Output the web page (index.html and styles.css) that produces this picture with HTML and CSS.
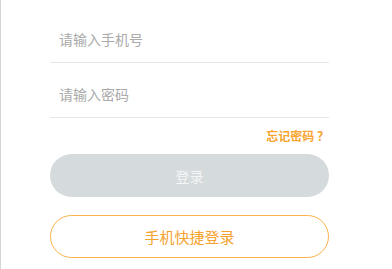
FILE: index.html
```html
<!DOCTYPE html>
<html>
<head>
<meta charset="utf-8">
<link rel="stylesheet" href="styles.css">
</head>
<body>
<div class="page">
  <form class="form">
    <div class="field"><span class="placeholder">请输入手机号</span></div>
    <div class="field"><span class="placeholder">请输入密码</span></div>
    <div class="forgot"><a class="forgot-link">忘记密码 ？</a></div>
    <button type="button" class="btn btn-login">登录</button>
    <button type="button" class="btn btn-quick">手机快捷登录</button>
  </form>
</div>
</body>
</html>
```
FILE: styles.css
```css
html, body {
  margin: 0;
  padding: 0;
  background: #ffffff;
}
.page {
  width: 392px;
  height: 269px;
  box-sizing: border-box;
  border-left: 1px solid #d4d4d4;
  overflow: hidden;
  font-family: "Noto Sans CJK SC", "Liberation Sans", sans-serif;
}
.form {
  display: flex;
  flex-direction: column;
  width: 279px;
  margin-left: 49px;
  padding-top: 8px;
}
.field {
  height: 54px;
  border-bottom: 1px solid #e6e6e6;
  box-sizing: content-box;
  display: flex;
  align-items: flex-start;
  padding-left: 9px;
}
.placeholder {
  margin-top: 21px;
  font-size: 14px;
  line-height: 20px;
  color: #a9a9a9;
}
.forgot {
  display: flex;
  justify-content: flex-end;
  padding-right: 0;
  height: 36px;
  align-items: center;
}
.forgot-link {
  font-size: 12px;
  font-weight: bold;
  color: #f7a530;
  line-height: 16px;
  white-space: pre;
}
.btn {
  display: flex;
  align-items: center;
  justify-content: center;
  width: 279px;
  border-radius: 22px;
  font-family: "Noto Sans CJK SC", "Liberation Sans", sans-serif;
  font-size: 14px;
  padding: 0;
  box-sizing: border-box;
}
.btn-login {
  height: 43px;
  background: #d5dadd;
  border: none;
  color: #f4f6f7;
}
.btn-quick {
  margin-top: 18px;
  height: 43px;
  background: #ffffff;
  border: 1px solid #f8b248;
  color: #f5a22f;
  font-size: 15px;
}
```
